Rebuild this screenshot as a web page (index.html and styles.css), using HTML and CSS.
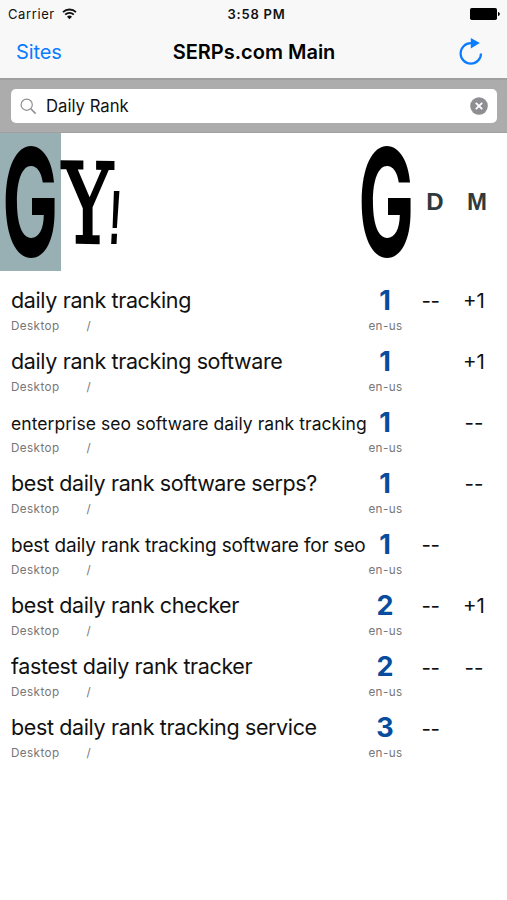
FILE: index.html
```html
<!DOCTYPE html>
<html lang="en">
<head>
  <meta charset="UTF-8" />
  <meta name="viewport" content="width=device-width, initial-scale=1.0" />
  <title>SERPs.com Main</title>
  <link rel="stylesheet" href="styles.css">
</head>
<body>
  <header class="top">
    <div class="status">
      <div class="carrier">
        <span>Carrier</span>
        <svg width="15" height="12" viewBox="0 0 15 12">
          <path d="M1 4.2a9.2 9.2 0 0 1 13 0M3.2 6.6a6.1 6.1 0 0 1 8.6 0" fill="none" stroke="#111" stroke-width="1.8" />
          <path d="M7.5 11.2L5 8.7a3.5 3.5 0 0 1 5 0z" fill="#111" />
        </svg>
      </div>
      <span class="time">3:58 PM</span>
      <div class="battery">
        <svg width="30" height="12" viewBox="0 0 30 12">
          <rect x="0" y="0" width="27" height="12" rx="1.8" />
          <path d="M28 4c2.4.3 2.4 3.7 0 4z" />
        </svg>
      </div>
    </div>
    <nav class="nav">
      <a class="back">Sites</a>
      <h1>SERPs.com Main</h1>
      <a class="refresh">
        <svg width="24" height="28" viewBox="0 0 24 28">
          <path d="M13 5.2H11.8A10.2 10.2 0 1 0 22 15.4" fill="none" stroke="#0a7cff" stroke-width="2.2" />
          <path d="M11.8 0L20.8 5L11.8 10.5z" fill="#0a7cff" />
        </svg>
      </a>
    </nav>
  </header>

  <div class="search">
    <div class="search-field">
      <svg width="17" height="17" viewBox="0 0 17 17">
        <circle cx="6.7" cy="6.7" r="5.6" fill="none" stroke="#8e8e93" stroke-width="1.2" />
        <path d="M10.8 10.8L15.6 15.6" stroke="#8e8e93" stroke-width="1.6" />
      </svg>
      <span class="search-text">Daily Rank</span>
      <svg width="18" height="18" viewBox="0 0 18 18">
        <circle cx="9" cy="9" r="8.8" fill="#8e8e93" />
        <path d="M5.8 5.8l6.4 6.4M12.2 5.8l-6.4 6.4" stroke="#fff" stroke-width="1.9" />
      </svg>
    </div>
  </div>

  <div class="engines">
    <div class="engine active">
      <svg width="61" height="138" viewBox="0 0 61 138">
        <text class="google" transform="translate(2.2 124) scale(.745 1.51)">G</text>
      </svg>
    </div>
    <div class="engine yahoo">
      <svg width="61" height="138" viewBox="0 0 61 138">
        <text class="yahoo-y" transform="translate(1.5 109) skewY(1) scale(.76 1.1)">Y</text>
        <text class="yahoo-mark" transform="translate(46.5 111) skewX(-3) scale(.5 1)">!</text>
      </svg>
    </div>
    <div class="engine">
      <svg width="61" height="138" viewBox="0 0 61 138">
        <text class="google" transform="translate(2.2 124) scale(.745 1.51)">G</text>
      </svg>
    </div>
    <span class="period">D</span>
    <span class="period">M</span>
  </div>

  <div class="list">
    <div class="row">
      <span class="name">daily rank tracking</span>
      <span class="rank">1</span><span class="day">--</span><span class="month">+1</span>
      <span class="device">Desktop <i>/</i></span><span class="locale">en-us</span>
    </div>
    <div class="row">
      <span class="name">daily rank tracking software</span>
      <span class="rank">1</span><span class="day"></span><span class="month">+1</span>
      <span class="device">Desktop <i>/</i></span><span class="locale">en-us</span>
    </div>
    <div class="row">
      <span class="name small">enterprise seo software daily rank tracking</span>
      <span class="rank">1</span><span class="day"></span><span class="month">--</span>
      <span class="device">Desktop <i>/</i></span><span class="locale">en-us</span>
    </div>
    <div class="row">
      <span class="name">best daily rank software serps?</span>
      <span class="rank">1</span><span class="day"></span><span class="month">--</span>
      <span class="device">Desktop <i>/</i></span><span class="locale">en-us</span>
    </div>
    <div class="row">
      <span class="name medium">best daily rank tracking software for seo</span>
      <span class="rank">1</span><span class="day">--</span><span class="month"></span>
      <span class="device">Desktop <i>/</i></span><span class="locale">en-us</span>
    </div>
    <div class="row">
      <span class="name">best daily rank checker</span>
      <span class="rank">2</span><span class="day">--</span><span class="month">+1</span>
      <span class="device">Desktop <i>/</i></span><span class="locale">en-us</span>
    </div>
    <div class="row">
      <span class="name">fastest daily rank tracker</span>
      <span class="rank">2</span><span class="day">--</span><span class="month">--</span>
      <span class="device">Desktop <i>/</i></span><span class="locale">en-us</span>
    </div>
    <div class="row">
      <span class="name">best daily rank tracking service</span>
      <span class="rank">3</span><span class="day">--</span><span class="month"></span>
      <span class="device">Desktop <i>/</i></span><span class="locale">en-us</span>
    </div>
  </div>
</body>
</html>
```
FILE: styles.css
```css
* {
  box-sizing: border-box;
}
body {
  margin: 0;
  height: 900px;
  overflow: hidden;
  background-color: #fff;
  color: #111;
  font-family: Inter, "Liberation Sans", sans-serif;
}
svg {
  display: block;
  overflow: visible;
}
.top {
  height: 78px;
  background-color: #f8f8f8;
}
.status {
  display: grid;
  grid-template-columns: 1fr auto 1fr;
  align-items: center;
  height: 27px;
  padding: 0 7px 0 8px;
  font-size: 13px;
}
.carrier {
  display: flex;
  align-items: center;
  gap: 7px;
  letter-spacing: 0.6px;
}
.time {
  padding-left: 5px;
  font-weight: 600;
  letter-spacing: 0.8px;
}
.battery {
  display: flex;
  justify-content: flex-end;
}
.nav {
  display: grid;
  grid-template-columns: 1fr auto 1fr;
  align-items: center;
  height: 50px;
  padding: 0 24px 0 16px;
}
.back {
  color: #0a7cff;
  font-size: 20px;
  letter-spacing: -0.1px;
}
.nav h1 {
  margin: 0;
  padding-left: 9px;
  color: #000;
  font-size: 20px;
  font-weight: 600;
}
.refresh {
  display: flex;
  justify-content: flex-end;
}
.search {
  height: 55px;
  padding: 9px 10px 0 11px;
  background-color: #acacac;
  border-top: 2px solid #9f9f9f;
  border-bottom: 1px solid #a0a0a0;
}
.search-field {
  display: flex;
  align-items: center;
  height: 34px;
  padding: 0 9px;
  background-color: #fff;
  border-radius: 5px;
}
.search-text {
  flex: 1;
  margin-left: 9px;
  padding-bottom: 1px;
  font-size: 16.7px;
}
.engines {
  display: grid;
  grid-template-columns: 61px 1fr 61px 36px 48px 6px;
  align-items: center;
  height: 138px;
}
.engine {
  height: 138px;
}
.active {
  background-color: #98b0b4;
}
.google {
  font-size: 100px;
  font-weight: 700;
}
.yahoo-y {
  font-family: "DejaVu Serif", serif;
  font-size: 100px;
  font-weight: normal;
  stroke: #000;
  stroke-width: 3px;
}
.yahoo-mark {
  font-family: "Liberation Sans", sans-serif;
  font-size: 77px;
  font-weight: bold;
}
.period {
  color: #2f3a3d;
  font-family: "Liberation Sans", sans-serif;
  font-size: 24px;
  font-weight: bold;
  text-align: center;
}
.list {
  padding-top: 13px;
}
.row {
  display: grid;
  grid-template-columns: 352px 44px 47px 40px;
  grid-template-rows: 33px 17.6px;
  align-items: center;
  height: 61.1px;
  padding-left: 11px;
}
.name {
  padding-bottom: 2px;
  font-size: 21.5px;
  letter-spacing: -0.37px;
  white-space: nowrap;
}
.small {
  padding: 2px 0 0;
  font-size: 17.5px;
  letter-spacing: 0.05px;
}
.medium {
  padding: 1px 0 0;
  font-size: 19px;
  letter-spacing: -0.17px;
}
.rank {
  color: #084c9e;
  font-size: 27px;
  font-weight: 700;
  line-height: 32px;
  text-align: center;
}
.day,
.month {
  font-size: 20.5px;
  text-align: center;
}
.day {
  letter-spacing: -0.5px;
}
.device,
.locale {
  color: #777;
  font-size: 11.7px;
  letter-spacing: 0.4px;
}
.device {
  display: flex;
  gap: 27px;
}
.device i {
  font-style: normal;
}
.locale {
  padding-left: 1px;
  text-align: center;
}
```
